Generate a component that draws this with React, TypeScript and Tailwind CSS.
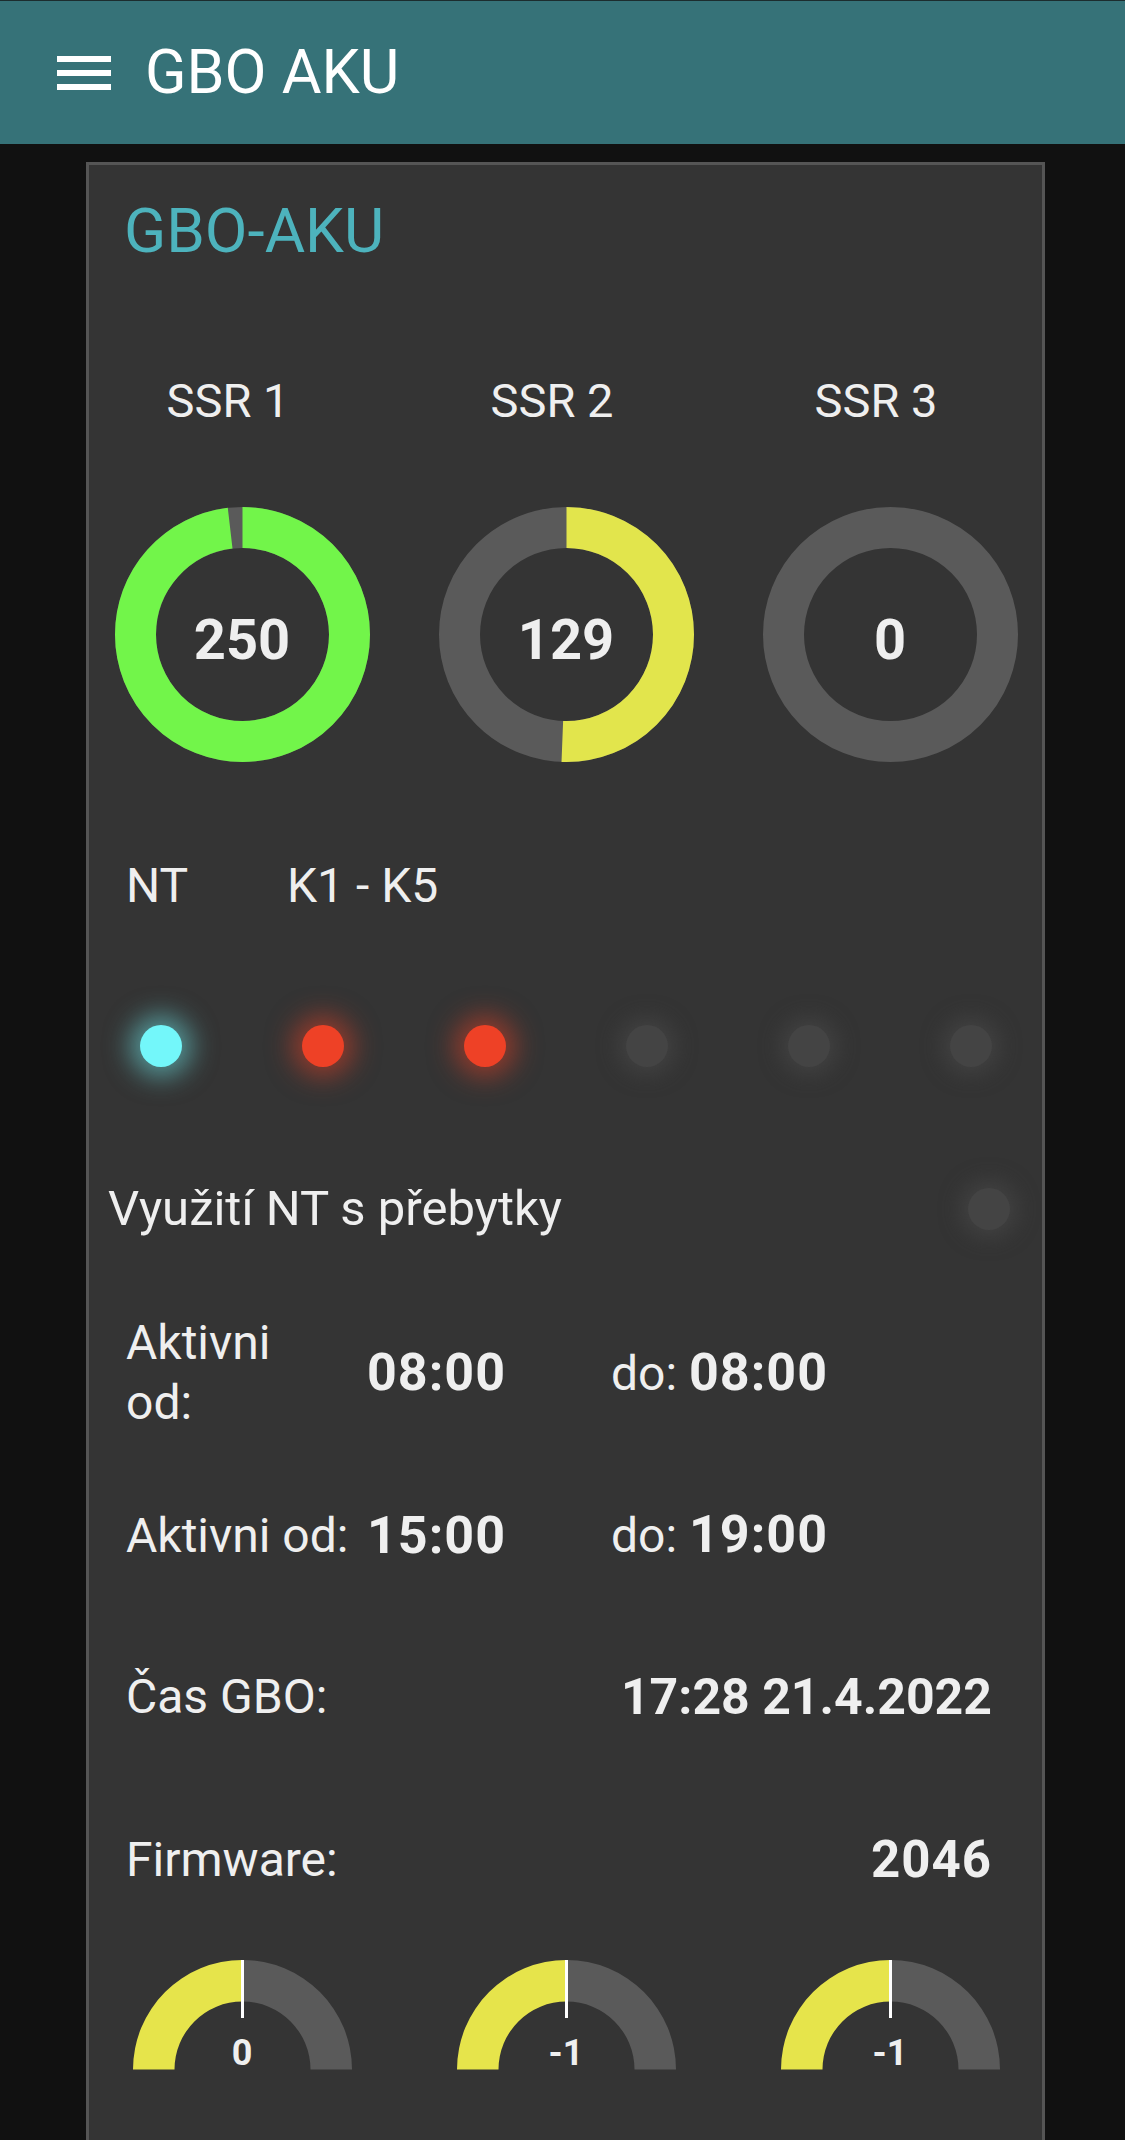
import React from 'react';

const font = { fontFamily: 'Roboto, "Liberation Sans", sans-serif' };

const donuts = [
  { label: 'SSR 1', value: 250, color: '#72f54a' },
  { label: 'SSR 2', value: 129, color: '#e2e54c' },
  { label: 'SSR 3', value: 0, color: '#e2e54c' },
];

const leds = [
  'bg-[#73f7fa] shadow-[0_0_26px_10px_rgba(115,247,250,0.5)]',
  'bg-[#ee4126] shadow-[0_0_26px_10px_rgba(238,65,38,0.5)]',
  'bg-[#ee4126] shadow-[0_0_26px_10px_rgba(238,65,38,0.5)]',
  'bg-[#444444] shadow-[0_0_20px_8px_rgba(74,74,74,0.6)]',
  'bg-[#444444] shadow-[0_0_20px_8px_rgba(74,74,74,0.6)]',
  'bg-[#444444] shadow-[0_0_20px_8px_rgba(74,74,74,0.6)]',
];

const gauges = ['0', '-1', '-1'];

function Donut({ value, color }: { value: number; color: string }) {
  const r = 107;
  const c = 2 * Math.PI * r;
  const frac = value / 255;
  return (
    <div className="relative w-[255px] h-[255px]">
      <svg width="255" height="255" viewBox="0 0 255 255">
        <circle cx="127.5" cy="127.5" r={r} fill="none" stroke="#5a5a5a" strokeWidth="41" />
        {value > 0 && (
          <circle
            cx="127.5"
            cy="127.5"
            r={r}
            fill="none"
            stroke={color}
            strokeWidth="41"
            strokeDasharray={`${c * frac} ${c}`}
            transform="rotate(-90 127.5 127.5)"
          />
        )}
      </svg>
      <div className="absolute inset-0 flex items-center justify-center pt-[10px] text-[56px] font-bold text-[#efefef] leading-none">
        {value}
      </div>
    </div>
  );
}

function Gauge({ value }: { value: string }) {
  return (
    <div className="relative w-[219px] h-[110px]">
      <svg width="219" height="110" viewBox="0 0 219 110">
        <path d="M 0 109.5 A 109.5 109.5 0 0 1 109.5 0 L 109.5 41.5 A 68 68 0 0 0 41.5 109.5 Z" fill="#e6e44b" />
        <path d="M 109.5 0 A 109.5 109.5 0 0 1 219 109.5 L 177.5 109.5 A 68 68 0 0 0 109.5 41.5 Z" fill="#5a5a5a" />
        <line x1="109.5" y1="0" x2="109.5" y2="58" stroke="#ffffff" strokeWidth="3" />
      </svg>
      <div className="absolute left-0 right-0 top-[75px] text-center text-[36px] font-bold leading-[36px] text-[#efefef]">
        {value}
      </div>
    </div>
  );
}

export default function App() {
  return (
    <div className="w-[1125px] h-[2140px] overflow-hidden bg-[#111111] flex flex-col text-[#efefef]" style={font}>
      {/* Header */}
      <header className="h-[144px] shrink-0 bg-[#367278] border-t border-[#1c2c2e] flex items-center">
        <div className="ml-[57px] flex flex-col gap-[8px]">
          <div className="w-[54px] h-[6px] bg-white" />
          <div className="w-[54px] h-[6px] bg-white" />
          <div className="w-[54px] h-[6px] bg-white" />
        </div>
        <h1 className="ml-[34px] text-[61px] leading-none text-white">GBO AKU</h1>
      </header>

      {/* Card */}
      <div className="mt-[18px] ml-[86px] w-[959px] flex-1 border-[3px] border-b-0 border-[#555555] bg-[#343434] pt-[35px]">
        <h2 className="pl-[35px] text-[62px] leading-[62px] text-[#4db3bd]">GBO-AKU</h2>

        {/* SSR donuts */}
        <div className="-ml-[9px] w-[972px] mt-[116px] grid grid-cols-3">
          {donuts.map((d) => (
            <div key={d.label} className="pr-[28px] text-center text-[47px] leading-[46px]">
              {d.label}
            </div>
          ))}
        </div>
        <div className="-ml-[9px] w-[972px] mt-[83px] grid grid-cols-3">
          {donuts.map((d) => (
            <div key={d.label} className="flex justify-center">
              <Donut value={d.value} color={d.color} />
            </div>
          ))}
        </div>

        {/* NT / K1 - K5 */}
        <div className="mt-[100px] pl-[37px] flex text-[48px] leading-[48px]">
          <span className="w-[161px]">NT</span>
          <span>K1 - K5</span>
        </div>
        <div className="-ml-[9px] w-[972px] mt-[115px] grid grid-cols-6">
          {leds.map((cls, i) => (
            <div key={i} className="flex justify-center">
              <div className={`w-[42px] h-[42px] rounded-full ${cls}`} />
            </div>
          ))}
        </div>

        {/* Využití NT */}
        <div className="mt-[118px] pl-[19px] pr-[32px] flex items-center justify-between text-[49px] leading-[48px]">
          <span>Využití NT s přebytky</span>
          <div className="w-[42px] h-[42px] rounded-full bg-[#444444] shadow-[0_0_20px_8px_rgba(74,74,74,0.6)]" />
        </div>

        {/* Active windows */}
        <div className="mt-[80px] pl-[37px] grid grid-cols-[241px_244px_1fr] items-center text-[48px] leading-[60px]">
          <span>
            Aktivni
            <br />
            od:
          </span>
          <span className="font-bold text-[52px] tracking-[1px]">08:00</span>
          <span>
            do: <span className="font-bold text-[52px] tracking-[1px]">08:00</span>
          </span>
        </div>
        <div className="mt-[72px] pl-[37px] grid grid-cols-[241px_244px_1fr] items-center text-[48px] leading-[60px]">
          <span className="whitespace-nowrap">Aktivni od:</span>
          <span className="font-bold text-[52px] tracking-[1px]">15:00</span>
          <span>
            do: <span className="font-bold text-[52px] tracking-[1px]">19:00</span>
          </span>
        </div>

        <div className="mt-[101px] pl-[37px] pr-[50px] flex items-center justify-between text-[48px] leading-[60px]">
          <span>Čas GBO:</span>
          <span className="font-bold text-[50px]">17:28 21.4.2022</span>
        </div>
        <div className="mt-[103px] pl-[37px] pr-[50px] flex items-center justify-between text-[48px] leading-[60px]">
          <span>Firmware:</span>
          <span className="font-bold text-[51px] tracking-[1px]">2046</span>
        </div>

        {/* Gauges */}
        <div className="-ml-[9px] w-[972px] mt-[70px] grid grid-cols-3">
          {gauges.map((g, i) => (
            <div key={i} className="flex justify-center">
              <Gauge value={g} />
            </div>
          ))}
        </div>
      </div>
    </div>
  );
}
